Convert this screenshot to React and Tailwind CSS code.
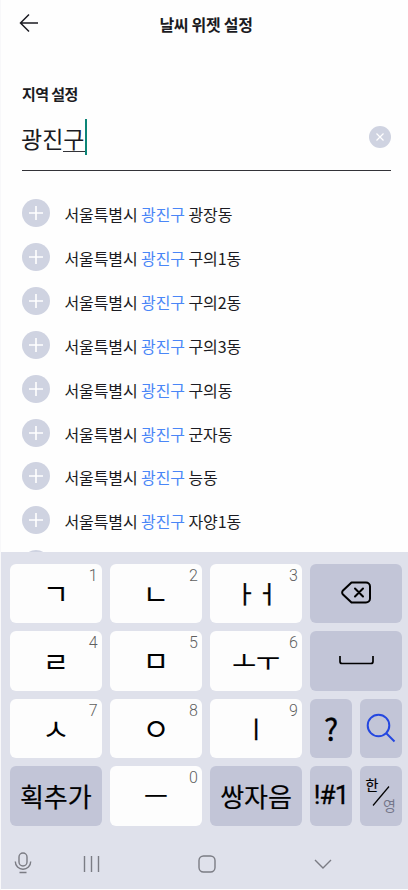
import React, { useState } from 'react'

const regions = [
    '광장동',
    '구의1동',
    '구의2동',
    '구의3동',
    '구의동',
    '군자동',
    '능동',
    '자양1동',
]

const PlusBadge = () => (
    <span className="w-7 h-7 shrink-0 rounded-full bg-[#cfd3e1] flex items-center justify-center">
        <svg width="14" height="14" viewBox="0 0 14 14" stroke="#fff" strokeWidth="1.6">
            <path d="M7 0v14M0 7h14" />
        </svg>
    </span>
)

const CharKey = ({ num, label, className = '' }) => (
    <button className="relative h-[59.5px] rounded-md bg-[#fdfdfd] flex items-center justify-center text-black">
        <span className={`leading-none whitespace-nowrap ${className}`}>{label}</span>
        <span className="absolute right-[4px] top-[4px] font-['Roboto'] font-light text-[16px] leading-4 text-[#5f5f5f]">{num}</span>
    </button>
)

const FnKey = ({ children, className = '' }) => (
    <button className={`h-[59.5px] rounded-md bg-[#c2c5d7] flex items-center justify-center text-black whitespace-nowrap ${className}`}>
        {children}
    </button>
)

const App = () => {
    const [keyword] = useState('광진구')

    return (
        <div className="w-[408px] h-[890px] bg-[#fefefe] flex flex-col overflow-hidden font-['Noto_Sans_CJK_KR',sans-serif] text-[#1b1b22] border-l border-[#f8f8fa]">

            {/* Header */}
            <header className="h-12 shrink-0 flex items-center pl-[18px]">
                <svg width="20" height="20" viewBox="0 0 20 20" fill="none" stroke="#1b1b22" strokeWidth="1.5" className="-mt-0.5">
                    <path d="M10 1.5 1.5 10l8.5 8.5M1.5 10H19" />
                </svg>
                <h1 className="flex-1 text-center pr-[35px] -mt-px text-[16px] font-bold tracking-[-0.3px]">날씨 위젯 설정</h1>
            </header>

            {/* Search field */}
            <section className="h-[123px] shrink-0 px-[21px] pr-[17px] flex flex-col">
                <h2 className="mt-[35px] h-[22px] leading-[22px] text-[15px] font-bold tracking-[-0.6px]">지역 설정</h2>
                <div className="mt-[13px] h-[53px] border-b-[1.5px] border-[#333338] flex items-start justify-between">
                    <div className="-ml-px mt-px flex items-start text-[23px]">
                        <span className="pt-px leading-9">{keyword.slice(0, 2)}</span>
                        <span className="h-[33px] pt-px leading-9 border-b border-[#333338]">{keyword.slice(2)}</span>
                        <span className="w-[2px] h-9 bg-[#0c8577]"></span>
                    </div>
                    <button className="mt-2 w-[22px] h-[22px] rounded-full bg-[#cfd3e1] flex items-center justify-center">
                        <svg width="8" height="8" viewBox="0 0 8 8" stroke="#fff" strokeWidth="1.2">
                            <path d="M.5.5l7 7M7.5.5l-7 7" />
                        </svg>
                    </button>
                </div>
            </section>

            {/* Results */}
            <ul className="h-[381px] shrink-0 overflow-hidden pt-[20.5px] pl-[21px]">
                {regions.map(name => (
                    <li key={name} className="h-[43.85px] flex items-center">
                        <PlusBadge />
                        <span className="ml-[14.5px] mt-[2px] text-[16px] leading-6 tracking-[-0.1px]">
                            서울특별시 <span className="text-[#4a86f7]">광진구</span> {name}
                        </span>
                    </li>
                ))}
                <li className="h-[43.85px] flex items-center">
                    <PlusBadge />
                </li>
            </ul>

            {/* Keyboard */}
            <div className="h-[337px] shrink-0 bg-[#dfe1eb] pt-[11.5px] pl-[9px] pr-[6px]">
                <div className="grid grid-cols-4 gap-x-[8.5px] gap-y-[8px]">
                    <CharKey num="1" label="ㄱ" className="text-[28px] [-webkit-text-stroke:0.2px_black]" />
                    <CharKey num="2" label="ㄴ" className="text-[28px] [-webkit-text-stroke:0.2px_black]" />
                    <CharKey num="3" label="ㅏㅓ" className="text-[24px] tracking-[-0.5px] -mt-px [-webkit-text-stroke:0.3px_black]" />
                    <FnKey>
                        <svg width="30" height="24" viewBox="0 0 30 24" fill="none" stroke="#000" strokeWidth="2" strokeLinejoin="round" strokeLinecap="round">
                            <path d="M10.5 1.5H25a4 4 0 0 1 4 4v12a4 4 0 0 1-4 4H10.5L2 13.5a2.8 2.8 0 0 1 0-4zM14 7.5l8 8M22 7.5l-8 8" />
                        </svg>
                    </FnKey>

                    <CharKey num="4" label="ㄹ" className="text-[28px] [-webkit-text-stroke:0.2px_black]" />
                    <CharKey num="5" label="ㅁ" className="text-[28px] -mt-px [-webkit-text-stroke:0.2px_black]" />
                    <CharKey num="6" label="ㅗㅜ" className="text-[26px] -mt-px [-webkit-text-stroke:0.2px_black]" />
                    <FnKey>
                        <svg width="35" height="9" viewBox="0 0 35 9" fill="none" stroke="#000" strokeWidth="1.7">
                            <path d="M1 0v5.5a2 2 0 0 0 2 2h29a2 2 0 0 0 2-2V0" />
                        </svg>
                    </FnKey>

                    <CharKey num="7" label="ㅅ" className="text-[30px] -mt-[3px]" />
                    <CharKey num="8" label="ㅇ" className="text-[30px] -mt-[2px]" />
                    <CharKey num="9" label="ㅣ" className="text-[24px] -mt-px [-webkit-text-stroke:0.3px_black]" />
                    <div className="grid grid-cols-2 gap-[8.5px]">
                        <FnKey className="text-[30px] [-webkit-text-stroke:0.3px_black]">?</FnKey>
                        <FnKey>
                            <svg width="30" height="30" viewBox="0 0 30 30" fill="none" stroke="#2447e0" strokeWidth="2">
                                <circle cx="12.5" cy="12.5" r="10.8" />
                                <path d="M20 20l8.5 8.5" />
                            </svg>
                        </FnKey>
                    </div>

                    <FnKey className="text-[26px] [-webkit-text-stroke:0.2px_black]">획추가</FnKey>
                    <CharKey num="0" label="ㅡ" className="text-[26px] -mt-px [-webkit-text-stroke:0.2px_black]" />
                    <FnKey className="text-[26px] [-webkit-text-stroke:0.2px_black]">쌍자음</FnKey>
                    <div className="grid grid-cols-2 gap-[8.5px]">
                        <FnKey className="font-['Roboto'] text-[26px] tracking-[-0.8px] [-webkit-text-stroke:0.3px_black]">!#1</FnKey>
                        <FnKey className="relative">
                            <span className="absolute left-[5px] top-[10px] text-[14px] leading-4 [-webkit-text-stroke:0.2px_black]">한</span>
                            <svg width="18" height="20" viewBox="0 0 18 20" stroke="#000" strokeWidth="1.2">
                                <path d="M1 19.5 17 .5" />
                            </svg>
                            <span className="absolute right-[6px] top-[31px] text-[14px] leading-4 text-[#75778a]">영</span>
                        </FnKey>
                    </div>
                </div>

                {/* Navigation bar */}
                <div className="mt-[26.5px] h-6 flex items-center text-[#7b7c84]">
                    <svg width="18" height="22" viewBox="0 0 18 22" fill="none" stroke="currentColor" strokeWidth="1.4" className="ml-[4px] -mt-[2px]">
                        <rect x="5" y="1" width="8" height="13" rx="4" />
                        <path d="M1.3 9.5a7.7 7.7 0 0 0 15.4 0M5.5 20.5h7" />
                    </svg>
                    <svg width="17" height="16" viewBox="0 0 17 16" stroke="currentColor" strokeWidth="1.4" className="ml-[51px]">
                        <path d="M1.5 0v16M8.5 0v16M15.5 0v16" />
                    </svg>
                    <svg width="18" height="18" viewBox="0 0 18 18" fill="none" stroke="currentColor" strokeWidth="1.4" className="ml-[98px]">
                        <rect x="1" y="1" width="16" height="16" rx="4.5" />
                    </svg>
                    <svg width="18" height="11" viewBox="0 0 18 11" fill="none" stroke="currentColor" strokeWidth="1.4" className="ml-[98px]">
                        <path d="M1 1l8 8 8-8" />
                    </svg>
                </div>
            </div>
        </div>
    )
}

export default App
